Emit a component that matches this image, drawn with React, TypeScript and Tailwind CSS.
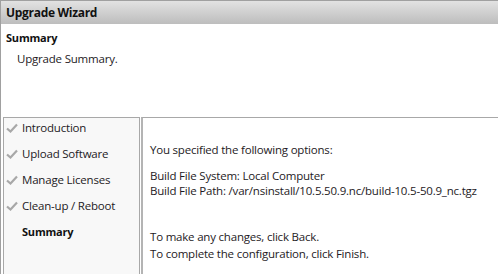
const steps = [
  { label: "Introduction", done: true },
  { label: "Upload Software", done: true },
  { label: "Manage Licenses", done: true },
  { label: "Clean-up / Reboot", done: true },
  { label: "Summary", done: false },
];

function Check() {
  return (
    <svg width="12" height="10" viewBox="0 0 12 10" className="shrink-0">
      <path d="M1 5.5 L4.5 8.5 L11 1.5" fill="none" stroke="#a8a8a8" strokeWidth="2.2" />
    </svg>
  );
}

export default function App() {
  return (
    <div
      className="w-[498px] h-[274px] overflow-hidden bg-white border-l border-[#a0a0a0] flex flex-col text-[11.5px] text-[#1e1a24]"
      style={{ fontFamily: '"Open Sans", "Noto Sans", sans-serif' }}
    >
      {/* Title bar */}
      <div className="h-[24px] shrink-0 border-t border-[#a0a0a0] bg-gradient-to-b from-[#e2e2e2] to-[#bdbdbd] flex items-center px-[5px]">
        <span className="font-bold text-[12px] tracking-[-0.3px] text-[#111]">Upgrade Wizard</span>
      </div>

      {/* Page heading */}
      <div className="h-[93px] shrink-0 px-[5px] pt-[6px]">
        <div className="font-bold text-[11px] leading-[15px] tracking-[-0.2px] text-[#111]">Summary</div>
        <div className="pl-[11px] pt-[6px] leading-[15px] tracking-[-0.2px]">Upgrade Summary.</div>
      </div>

      {/* Body */}
      <div className="flex-1 flex pl-[2px] gap-[1px]">
        <div className="w-[137px] shrink-0 bg-[#f8f8f8] border border-[#a8a8a8] border-b-0">
          {steps.map((s) => (
            <div key={s.label} className="h-[26px] flex items-start pt-[2px] leading-[15px] gap-[3px] pl-[1px] tracking-[-0.2px]">
              <span className="w-[14px] h-[15px] flex items-center justify-center">{s.done && <Check />}</span>
              <span className={s.done ? "" : "font-bold text-[11px] text-[#111]"}>{s.label}</span>
            </div>
          ))}
        </div>
        <div className="flex-1 border-l-2 border-t border-[#a8a8a8] border-l-[#b4b4b4] pl-[7px] pt-[24px] leading-[15px] tracking-[-0.2px]">
          <div>You specified the following options:</div>
          <div className="h-[11px]" />
          <div>Build File System: Local Computer</div>
          <div>Build File Path: /var/nsinstall/10.5.50.9.nc/build-10.5-50.9_nc.tgz</div>
          <div className="h-[31px]" />
          <div>To make any changes, click Back.</div>
          <div className="mt-[2px]">To complete the configuration, click Finish.</div>
        </div>
      </div>
    </div>
  );
}
